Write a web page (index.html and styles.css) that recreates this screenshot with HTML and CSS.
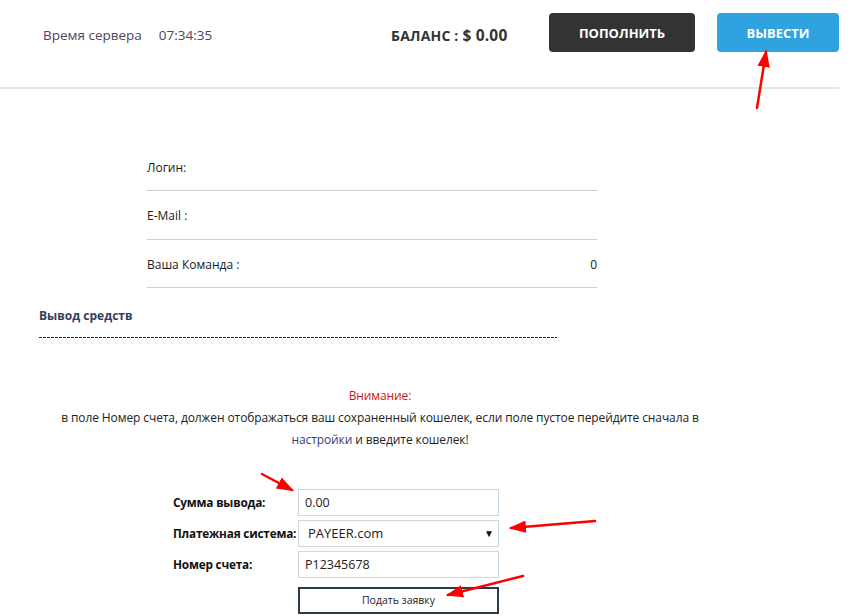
FILE: index.html
```html
<!DOCTYPE html>
<html lang="ru">
<head>
<meta charset="utf-8">
<title>Вывод средств</title>
<link rel="stylesheet" href="styles.css">
</head>
<body>
<div class="page">
  <header class="topbar">
    <div class="server-time">
      <span class="st-label">Время сервера</span>
      <span class="st-value">07:34:35</span>
    </div>
    <div class="balance">БАЛАНС : <span class="balance-sum">$ 0.00</span></div>
    <div class="actions">
      <a class="btn btn-dark">ПОПОЛНИТЬ</a>
      <a class="btn btn-blue">ВЫВЕСТИ</a>
    </div>
  </header>

  <section class="info">
    <div class="info-row"><span>Логин:</span><span></span></div>
    <div class="info-row"><span>E-Mail :</span><span></span></div>
    <div class="info-row"><span>Ваша Команда :</span><span>0</span></div>
  </section>

  <h3 class="section-title">Вывод средств</h3>
  <div class="dashes"></div>

  <div class="notice">
    <div class="notice-title">Внимание:</div>
    <p>в поле Номер счета, должен отображаться ваш сохраненный кошелек, если поле пустое перейдите сначала в <a class="link">настройки</a> и введите кошелек!</p>
  </div>

  <form class="withdraw">
    <div class="frow">
      <label class="flabel">Сумма вывода:</label>
      <div class="field">0.00</div>
    </div>
    <div class="frow">
      <label class="flabel">Платежная система:</label>
      <div class="field select">PAYEER.com<span class="caret">&#9660;</span></div>
    </div>
    <div class="frow">
      <label class="flabel">Номер счета:</label>
      <div class="field">P12345678</div>
    </div>
    <div class="frow">
      <span class="flabel"></span>
      <button type="button" class="submit">Подать заявку</button>
    </div>
  </form>

  <svg class="arrows" width="868" height="616" viewBox="0 0 868 616">
    <defs>
      <marker id="ah" markerWidth="7" markerHeight="5" refX="6" refY="2.5" orient="auto" markerUnits="strokeWidth">
        <path d="M0,0 L7,2.5 L0,5 Z" fill="#f00"/>
      </marker>
    </defs>
    <g stroke="#f00" stroke-width="2.5" fill="none" stroke-linecap="round">
      <line x1="757" y1="108" x2="766" y2="52" marker-end="url(#ah)"/>
      <line x1="262" y1="474" x2="292" y2="490" marker-end="url(#ah)"/>
      <line x1="595" y1="521" x2="511" y2="528" marker-end="url(#ah)"/>
      <line x1="523" y1="576" x2="448" y2="595" marker-end="url(#ah)"/>
    </g>
  </svg>
</div>
</body>
</html>
```

FILE: styles.css
```css
* { box-sizing: border-box; }
html, body { margin: 0; padding: 0; background: #fff; }
body {
  font-family: "Open Sans", "Noto Sans", "Liberation Sans", sans-serif;
  color: #222;
  width: 868px;
  height: 616px;
  overflow: hidden;
}
.page { position: relative; width: 868px; height: 616px; }

.topbar {
  width: 839px;
  height: 89px;
  border-bottom: 2px solid #e6e6e6;
  display: flex;
  align-items: flex-start;
  padding-top: 13px;
}
.server-time {
  margin-left: 43px;
  margin-top: 13px;
  font-size: 13.5px;
  color: #4e4460;
  display: flex;
  gap: 17px;
  width: 348px;
}
.balance {
  margin-top: 11px;
  font-size: 14px;
  font-weight: 700;
  color: #333;
  width: 158px;
  letter-spacing: 0.2px;
}
.balance-sum { font-size: 15.5px; }
.actions { display: flex; gap: 22px; }
.btn {
  display: flex;
  align-items: center;
  justify-content: center;
  height: 39px;
  border-radius: 4px;
  color: #fff;
  font-size: 13px;
  font-weight: 700;
}
.btn-dark { width: 146px; background: #333333; }
.btn-blue { width: 122px; background: #2fa3df; }

.info {
  margin-left: 147px;
  width: 450px;
  margin-top: 54px;
}
.info-row {
  display: flex;
  justify-content: space-between;
  align-items: center;
  height: 48.3px;
  padding-top: 2px;
  border-bottom: 1px solid #cfcfcf;
  font-size: 12px;
  color: #1a1a1a;
}
.section-title {
  margin: 19px 0 0 39px;
  font-size: 12px;
  font-weight: 700;
  color: #34405a;
  line-height: 18px;
}
.dashes {
  margin: 12px 0 0 39px;
  width: 518px;
  height: 1px;
  background-image: linear-gradient(to right, #2a2a2a 3px, transparent 3px);
  background-size: 4px 1px;
  background-repeat: repeat-x;
}

.notice {
  width: 760px;
  text-align: center;
  margin-top: 47px;
  font-size: 12px;
  letter-spacing: -0.1px;
  line-height: 22px;
  color: #222;
}
.notice-title { color: #c81a1a; }
.notice p { margin: 0 auto; width: 680px; }
.link { color: #3b3c7a; }

.withdraw {
  margin: 38px 0 0 173px;
  display: flex;
  flex-direction: column;
  gap: 4px;
}
.frow { display: flex; align-items: center; }
.flabel {
  width: 125px;
  font-size: 11.8px;
  letter-spacing: -0.2px;
  font-weight: 700;
  color: #111;
  white-space: nowrap;
}
.field {
  width: 201px;
  height: 27px;
  border: 1px solid #c9d7e2;
  font-size: 12.5px;
  padding-left: 6px;
  display: flex;
  align-items: center;
  color: #222;
}
.field.select { padding-left: 9px; justify-content: space-between; padding-right: 4px; font-size: 13px; }
.caret { font-size: 10px; color: #111; }
.submit {
  width: 201px;
  height: 27px;
  margin-top: 5px;
  border: 2px solid #2c3a4e;
  background: #fff;
  font-family: inherit;
  font-size: 10.5px;
  color: #222;
  padding: 0;
}

.arrows { position: absolute; left: 0; top: 0; pointer-events: none; }
```
